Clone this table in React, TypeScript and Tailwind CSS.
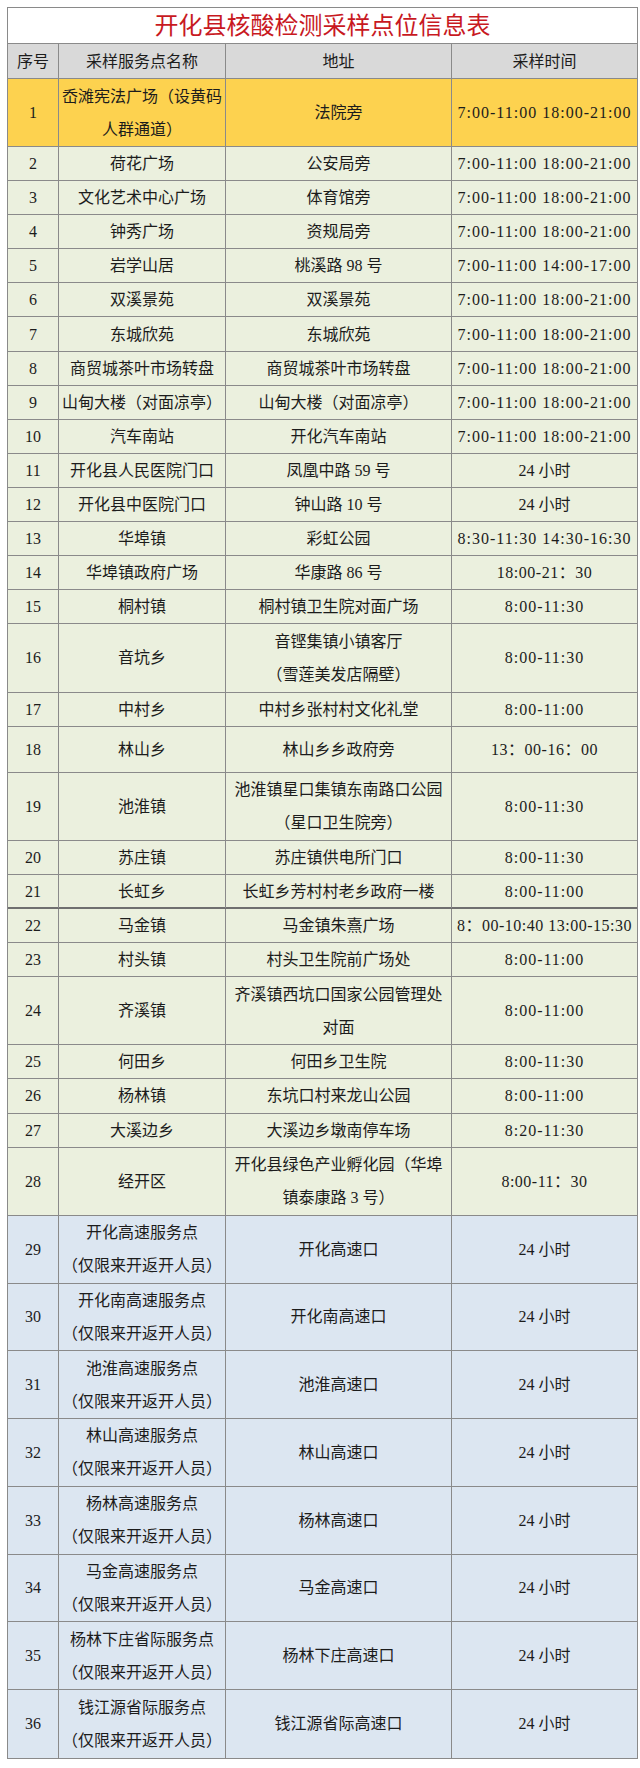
type Kind = "y" | "s" | "d" | "t" | "b";

// [no, name, address, time, kind]  — "\n" splits a cell into lines
const rows: [string, string, string, string, Kind][] = [
  ["1", "岙滩宪法广场（设黄码\n人群通道）", "法院旁", "7:00-11:00 18:00-21:00", "y"],
  ["2", "荷花广场", "公安局旁", "7:00-11:00 18:00-21:00", "s"],
  ["3", "文化艺术中心广场", "体育馆旁", "7:00-11:00 18:00-21:00", "s"],
  ["4", "钟秀广场", "资规局旁", "7:00-11:00 18:00-21:00", "s"],
  ["5", "岩学山居", "桃溪路 98 号", "7:00-11:00 14:00-17:00", "s"],
  ["6", "双溪景苑", "双溪景苑", "7:00-11:00 18:00-21:00", "s"],
  ["7", "东城欣苑", "东城欣苑", "7:00-11:00 18:00-21:00", "s"],
  ["8", "商贸城茶叶市场转盘", "商贸城茶叶市场转盘", "7:00-11:00 18:00-21:00", "s"],
  ["9", "山甸大楼（对面凉亭）", "山甸大楼（对面凉亭）", "7:00-11:00 18:00-21:00", "s"],
  ["10", "汽车南站", "开化汽车南站", "7:00-11:00 18:00-21:00", "s"],
  ["11", "开化县人民医院门口", "凤凰中路 59 号", "24 小时", "s"],
  ["12", "开化县中医院门口", "钟山路 10 号", "24 小时", "s"],
  ["13", "华埠镇", "彩虹公园", "8:30-11:30 14:30-16:30", "s"],
  ["14", "华埠镇政府广场", "华康路 86 号", "18:00-21：30", "s"],
  ["15", "桐村镇", "桐村镇卫生院对面广场", "8:00-11:30", "s"],
  ["16", "音坑乡", "音铿集镇小镇客厅\n（雪莲美发店隔壁）", "8:00-11:30", "d"],
  ["17", "中村乡", "中村乡张村村文化礼堂", "8:00-11:00", "s"],
  ["18", "林山乡", "林山乡乡政府旁", "13：00-16：00", "t"],
  ["19", "池淮镇", "池淮镇星口集镇东南路口公园\n（星口卫生院旁）", "8:00-11:30", "d"],
  ["20", "苏庄镇", "苏庄镇供电所门口", "8:00-11:30", "s"],
  ["21", "长虹乡", "长虹乡芳村村老乡政府一楼", "8:00-11:00", "s"],
  ["22", "马金镇", "马金镇朱熹广场", "8：00-10:40 13:00-15:30", "s"],
  ["23", "村头镇", "村头卫生院前广场处", "8:00-11:00", "s"],
  ["24", "齐溪镇", "齐溪镇西坑口国家公园管理处\n对面", "8:00-11:00", "d"],
  ["25", "何田乡", "何田乡卫生院", "8:00-11:30", "s"],
  ["26", "杨林镇", "东坑口村来龙山公园", "8:00-11:00", "s"],
  ["27", "大溪边乡", "大溪边乡墩南停车场", "8:20-11:30", "s"],
  ["28", "经开区", "开化县绿色产业孵化园（华埠\n镇泰康路 3 号）", "8:00-11：30", "d"],
  ["29", "开化高速服务点\n（仅限来开返开人员）", "开化高速口", "24 小时", "b"],
  ["30", "开化南高速服务点\n（仅限来开返开人员）", "开化南高速口", "24 小时", "b"],
  ["31", "池淮高速服务点\n（仅限来开返开人员）", "池淮高速口", "24 小时", "b"],
  ["32", "林山高速服务点\n（仅限来开返开人员）", "林山高速口", "24 小时", "b"],
  ["33", "杨林高速服务点\n（仅限来开返开人员）", "杨林高速口", "24 小时", "b"],
  ["34", "马金高速服务点\n（仅限来开返开人员）", "马金高速口", "24 小时", "b"],
  ["35", "杨林下庄省际服务点\n（仅限来开返开人员）", "杨林下庄高速口", "24 小时", "b"],
  ["36", "钱江源省际服务点\n（仅限来开返开人员）", "钱江源省际高速口", "24 小时", "b"],
];

const rowClass: Record<Kind, string> = {
  y: "h-[68px] bg-[#fdd24f]",
  s: "h-[34.1px] bg-[#ebf0de]",
  d: "h-[68.2px] bg-[#ebf0de]",
  t: "h-[46px] bg-[#ebf0de]",
  b: "h-[67.75px] bg-[#dce6f1]",
};

const Cell = ({ text, last, time }: { text: string; last?: boolean; time?: boolean }) => {
  // half-width times get wider spacing, ones with a full-width colon less
  const spacing = !time
    ? ""
    : text.includes("：")
    ? "tracking-[0.5px]"
    : text.includes(":")
    ? "tracking-[1px]"
    : "";
  return (
    <div
      className={`flex flex-col items-center justify-center text-center whitespace-nowrap leading-[33px] ${
        last ? "" : "border-r border-[#8a8a8a]"
      } ${spacing}`}
    >
      {text.split("\n").map((line, i) => (
        <div key={i}>{line}</div>
      ))}
    </div>
  );
};

export default function App() {
  return (
    <div className="min-h-[1768px] bg-white pt-[7px] pl-[7px]">
      <div className="w-[631px] border border-[#8a8a8a] text-[16px] text-[#1c1c1c] font-['Liberation_Serif','Noto_Sans_CJK_SC',serif]">
        <div className="flex h-[36px] items-center justify-center border-b border-[#8a8a8a] bg-white text-[24px] text-[#c8191f]">
          开化县核酸检测采样点位信息表
        </div>
        <div className="grid h-[35px] grid-cols-[51px_167px_226px_185px] border-b border-[#8a8a8a] bg-[#d9d9d9]">
          <Cell text="序号" />
          <Cell text="采样服务点名称" />
          <Cell text="地址" />
          <Cell text="采样时间" last />
        </div>
        {rows.map(([no, name, addr, time, kind], i) => (
          <div
            key={no}
            className={`grid grid-cols-[51px_167px_226px_185px] ${rowClass[kind]} ${
              i === rows.length - 1
                ? ""
                : no === "21"
                ? "border-b-2 border-[#6f6f6f]"
                : "border-b border-[#8a8a8a]"
            }`}
          >
            <Cell text={no} />
            <Cell text={name} />
            <Cell text={addr} />
            <Cell text={time} last time />
          </div>
        ))}
      </div>
    </div>
  );
}
